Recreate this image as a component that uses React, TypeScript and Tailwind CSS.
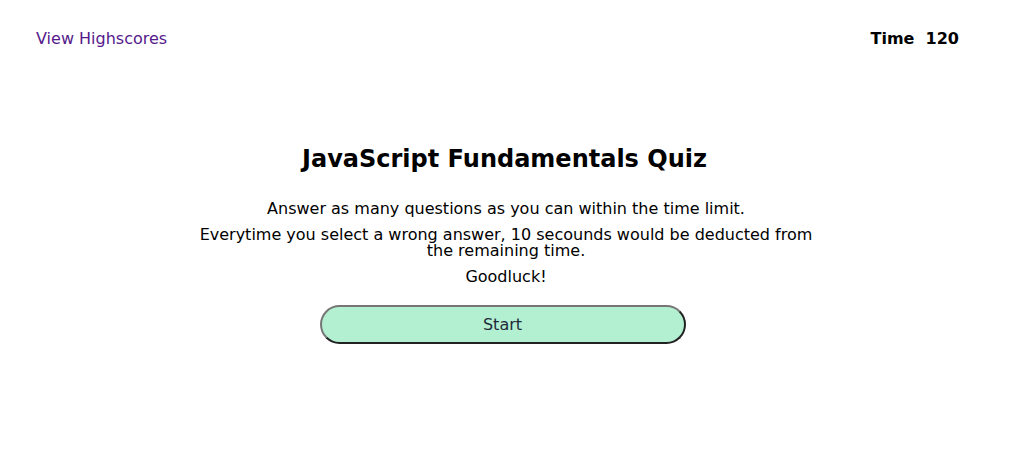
export default function App() {
  return (
    <div className="min-h-[474px] bg-white text-black font-['DejaVu_Sans',sans-serif]">
      <header className="flex items-center justify-between pl-9 pr-[53px] pt-[29px]">
        <a href="#" className="text-[16px] leading-5 text-[#551a8b]">
          View Highscores
        </a>
        <div className="text-[16px] leading-5 font-bold">
          Time&nbsp;&nbsp;120
        </div>
      </header>

      <main className="mx-auto mt-[96px] flex w-[620px] flex-col items-center text-center">
        <h1 className="mr-[3px] text-[24px] leading-7 font-bold">JavaScript Fundamentals Quiz</h1>
        <p className="mt-[28px] text-[16px] leading-4">
          Answer as many questions as you can within the time limit.
        </p>
        <p className="mt-[10px] text-[16px] leading-4">
          Everytime you select a wrong answer, 10 secounds would be deducted from the remaining time.
        </p>
        <p className="mt-[10px] text-[16px] leading-4">Goodluck!</p>
        <button
          type="button"
          className="mt-[20px] mr-[7px] h-[39px] w-[366px] rounded-[20px] border-2 border-t-[#767676] border-l-[#767676] border-b-[#222] border-r-[#222] bg-[#b3f0d1] text-[16px] text-[#1f2a3a]"
        >
          Start
        </button>
      </main>
    </div>
  );
}
